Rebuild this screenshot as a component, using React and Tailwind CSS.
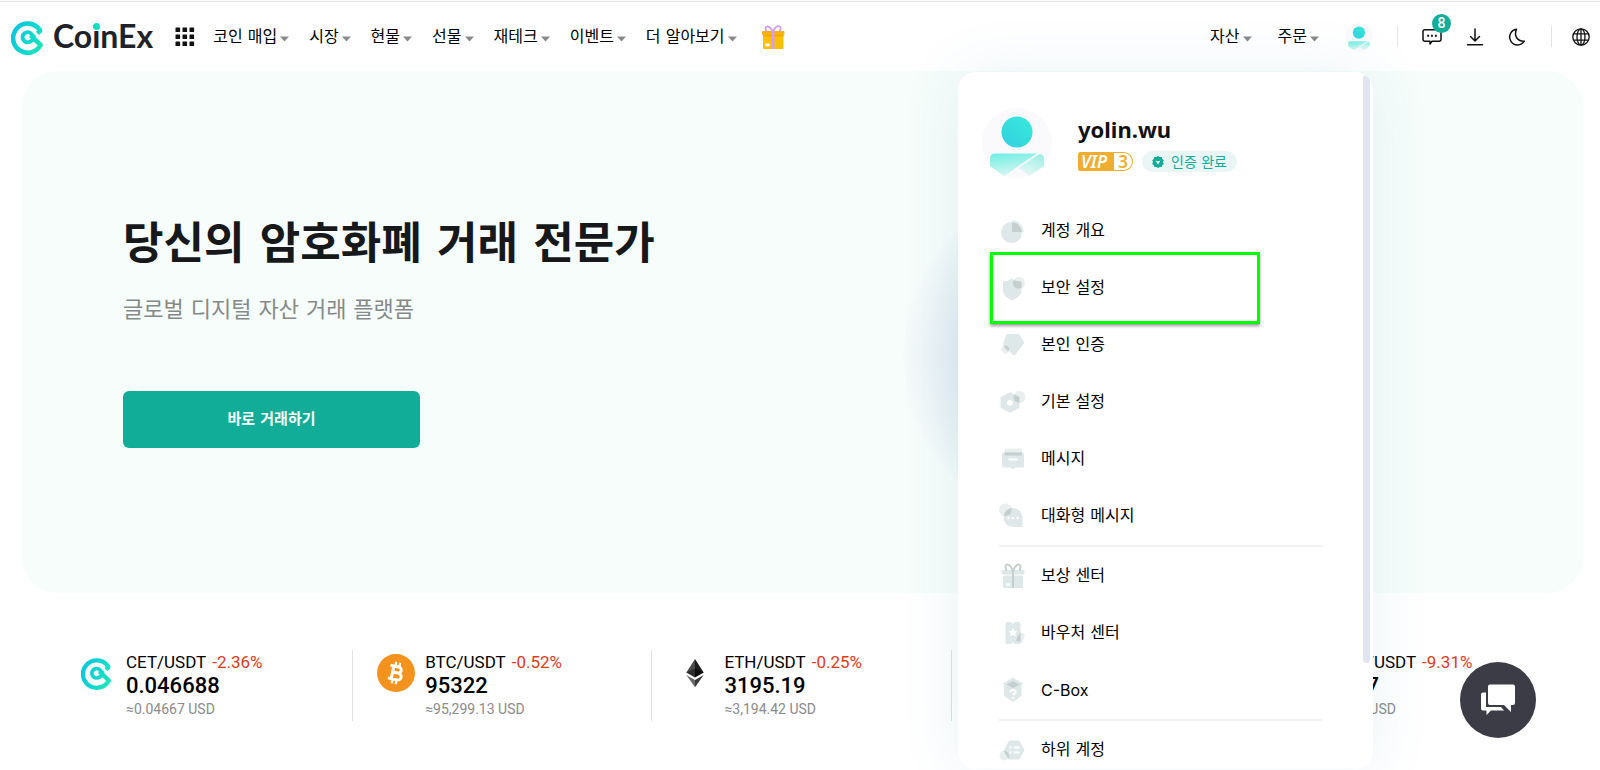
import React from "react";

const KO = "font-['DejaVu_Sans','Noto_Sans_CJK_KR',sans-serif]";

function CoinExMark({ id, className }) {
  return (
    <svg viewBox="0 0 34 36" className={className} fill="none" aria-hidden="true">
      <defs>
        <linearGradient id={id} x1="0" y1="10" x2="34" y2="26" gradientUnits="userSpaceOnUse">
          <stop stopColor="#0cc5dc" />
          <stop offset="0.55" stopColor="#10d8cf" />
          <stop offset="1" stopColor="#1ee6b4" />
        </linearGradient>
      </defs>
      <path
        d="M26.4 14.4L28.6 12.4 Q29.400 11.600 28.4 10.4 A14.6 14.6 0 1 0 29.6 26 L19.6 16.4"
        stroke={`url(#${id})`}
        strokeWidth="4.6"
        strokeLinejoin="round"
      />
      <path d="M23.6 18.6 L20.4 15 A5 5 0 1 0 19.4 22.4 L22.4 20.6" stroke={`url(#${id})`} strokeWidth="4" />
    </svg>
  );
}

function Caret() {
  return (
    <svg viewBox="0 0 9 6" className="mt-1 h-[6px] w-[9px]" aria-hidden="true">
      <path d="M0 0.5h9L4.500 5.500z" fill="#8a8a8a" />
    </svg>
  );
}

function NavItem({ children }) {
  return (
    <button type="button" className={`flex items-center gap-[3px] text-base leading-6 whitespace-nowrap text-black ${KO}`}>
      {children}
      <Caret />
    </button>
  );
}

function Avatar({ id, className }) {
  return (
    <svg viewBox="0 0 70 70" className={className} aria-hidden="true">
      <defs>
        <linearGradient id={`${id}h`} x1="0" y1="1" x2="1" y2="0">
          <stop stopColor="#34cfe0" />
          <stop offset="1" stopColor="#38eadb" />
        </linearGradient>
        <linearGradient id={`${id}b`} x1="0" y1="0" x2="0.3" y2="1">
          <stop stopColor="#6ceee2" />
          <stop offset="1" stopColor="#d6f6f2" />
        </linearGradient>
        <linearGradient id={`${id}r`} x1="1" y1="0" x2="0.6" y2="1">
          <stop stopColor="#9aeee4" />
          <stop offset="1" stopColor="#e2f7f5" />
        </linearGradient>
      </defs>
      <circle cx="35" cy="35" r="35" fill="#fafafc" />
      <circle cx="35" cy="24" r="15.500" fill={`url(#${id}h)`} />
      <path d="M13 45.500h42L22 68 8 58v-7.500q0-5 5-5z" fill={`url(#${id}b)`} />
      <path d="M57 46q5 0 5 5v7L47.500 68 36.500 60z" fill={`url(#${id}r)`} />
    </svg>
  );
}

function GiftIcon({ className }) {
  return (
    <svg viewBox="0 0 24 24" className={className} aria-hidden="true">
      <rect x="2" y="8" width="20.500" height="16" rx="1" fill="#fcc106" />
      <path d="M2 10h20.500v1.500H2z" fill="#eda900" />
      <rect x="1" y="6" width="22.500" height="4" rx="1" fill="#f9b30a" />
      <path d="M12 7C9 .5 4.600.2 4.600 3.600 4.600 5 5 6 5.500 6.500M12 7C15-.5 19.600.2 19.600 3.600 19.600 5 19 6 18.500 6.500" fill="none" stroke="#cf9bff" strokeWidth="1.800" />
      <path d="M10.900 6h2.500v18h-2.500z" fill="#d29dff" />
      <rect x="4.500" y="18.500" width="4" height="2.800" fill="#fff" />
    </svg>
  );
}

const base = "#dfe8e8";
const soft = "#e8efee";
const dark = "#c5cfce";

const drawings = {
  overview: (
    <>
      <circle cx="12.500" cy="15.500" r="10.500" fill={base} />
      <path d="M13 3a12 12 0 0 1 12 12H13z" fill={soft} />
      <path d="M13 5.200A10.300 10.300 0 0 1 23 15H13z" fill={dark} />
    </>
  ),
  security: (
    <>
      <path d="M4 7.500q5 0 9-3 4 3 9.500 3V17q0 5-9.500 9.500Q4 22 4 17z" fill={base} />
      <circle cx="20" cy="9" r="6" fill={soft} />
      <path d="M14.800 6q3.200 1.500 7.700 1.500V14q-5 2-7.500-1.500-2-3-.2-6.500z" fill={dark} />
    </>
  ),
  identity: (
    <>
      <path d="M7 4q.8-1 2-1h9.500q1.200 0 2 1l4.200 6.500q.8 1.200 0 2.200L16.500 23.500q-1.500 1.500-3 0L4 13z" fill={base} />
      <path d="M6.200 13.200L11.500 19l-5.200 4.500L1 18z" fill={soft} />
      <path d="M5 14.300q4.500 0 5.500 3.500l-1.500 3L4.500 15z" fill={dark} />
    </>
  ),
  preferences: (
    <>
      <circle cx="20.500" cy="9" r="6" fill={soft} />
      <path fillRule="evenodd" d="M11 4l9.500 5.200v10.600L11 25l-9.500-5.200V9.200zM11 11.800a3 3 0 1 0 .01 0z" fill={base} />
      <path d="M15.800 6.600l4.700 2.600v5.600q-6-.5-6-6z" fill={dark} />
    </>
  ),
  messages: (
    <>
      <rect x="5.500" y="3.500" width="17.500" height="8" rx="1.500" fill={soft} />
      <path d="M4.500 7.500H23.500q1.500 0 1.500 1.500v12q0 1.500-1.500 1.500h-7l-2.500 2-2.500-2H4.500Q3 22.500 3 21V9q0-1.500 1.500-1.500z" fill={base} />
      <path d="M5.500 7.500H23V10.500H5.500z" fill={dark} />
      <path d="M9.500 14.500h9" stroke="#fff" strokeWidth="2" />
    </>
  ),
  chat: (
    <>
      <circle cx="6.500" cy="8" r="6.500" fill={soft} />
      <path d="M14 6a9.500 9.500 0 0 1 9.500 9.500V25H14A9.500 9.500 0 0 1 14 6z" fill={base} />
      <path d="M12.800 6.100q1 8-8 8 1-7 8-8z" fill={dark} />
      <circle cx="9.500" cy="16" r="1.200" fill="#fff" />
      <circle cx="14" cy="16" r="1.200" fill="#fff" />
      <circle cx="18.500" cy="16" r="1.200" fill="#fff" />
    </>
  ),
  rewards: (
    <>
      <rect x="4" y="13.500" width="20" height="12.500" rx="1.500" fill={base} />
      <rect x="2.500" y="8" width="23" height="4.500" rx="1.500" fill={base} />
      <path d="M14 10C12 1.500 6.500 1 6.500 5q0 2 1 3.500M14 10c2-8.500 7.500-9 7.500-5q0 2-1 3.500M14 8v18" fill="none" stroke={dark} strokeWidth="2" />
      <path d="M7 21.500h4v2H7z" fill="#fff" />
    </>
  ),
  vouchers: (
    <>
      <path d="M17 17l5-3.500 4 2-3 9h-7z" fill={soft} />
      <path d="M8 3h4q1.500 3 4 0h4q1.500 0 1.500 1.500v19q0 1.500-1.500 1.500h-4q-2-3-4 0H8q-1.500 0-1.500-1.500v-19Q6.500 3 8 3z" fill={base} />
      <path d="M14 9l1.400 2.700 3 .5-2.100 2.100.5 3L14 15.900l-2.800 1.400.5-3-2.100-2.100 3-.5z" fill="#fff" />
      <path d="M21.500 13.500v9h-4q0-5 4-9z" fill={dark} />
    </>
  ),
  box: (
    <>
      <path d="M14 1.500L24 7.500 22.500 9v11L14 26 5 20V9L4 7.500z" fill={base} />
      <path d="M14 5l6.500 3.500L14 12 7.500 8.500z" fill={dark} />
      <path d="M11.500 16q0-2 2.500-2 2.800 0 2.800 2 0 1.300-1.600 1.900-1 .5-1 1.600M14.200 21v2" fill="none" stroke="#fff" strokeWidth="1.800" />
    </>
  ),
  subaccount: (
    <>
      <path d="M10 4.500h10.500l5 9.500-5 9.500H10L5 14z" fill={base} />
      <circle cx="5.500" cy="19.500" r="5" fill={soft} />
      <path d="M5.800 14.800q4.500.8 4.600 6.500L9.300 22.800 5 15.500z" fill={dark} />
      <path d="M10.500 11.500h2M14.500 11.500h6M10.500 16.500h2M14.500 16.500h6" stroke="#fff" strokeWidth="2" />
    </>
  ),
};

const groups = [
  [
    ["overview", "계정 개요"],
    ["security", "보안 설정"],
    ["identity", "본인 인증"],
    ["preferences", "기본 설정"],
    ["messages", "메시지"],
    ["chat", "대화형 메시지"],
  ],
  [
    ["rewards", "보상 센터"],
    ["vouchers", "바우처 센터"],
    ["box", "C-Box"],
  ],
  [["subaccount", "하위 계정"]],
];

function MenuRow({ icon, label }) {
  const highlighted = icon === "security";
  const font = label === "C-Box" ? "font-[Inter,sans-serif]" : KO;
  return (
    <li className="relative">
      <a href="#" className={`flex h-[57px] items-center gap-[14px] text-base text-black ${font}`}>
        <svg viewBox="0 0 28 28" className="size-7" aria-hidden="true">
          {drawings[icon]}
        </svg>
        {label}
      </a>
      {highlighted && (
        <span className="pointer-events-none absolute -top-[7px] -left-[9px] h-[72px] w-[270px] border-[3px] border-[#00ff00] shadow-[0_2px_3px_rgba(0,0,0,0.4)]" />
      )}
    </li>
  );
}

function AccountMenu() {
  return (
    <aside className="absolute top-full right-[227px] z-20 mt-px flex h-[calc(100vh-73px)] w-[415px] overflow-hidden rounded-[18px] bg-white shadow-[0_0_60px_rgba(60,140,160,0.11)]">
      <div className="min-w-0 flex-1 pr-[38px] pl-[41px]">
        <div className="-ml-[17px] flex items-center gap-[26px] pt-9">
          <Avatar id="big" className="size-[70px]" />
          <div className="flex flex-col gap-[7px]">
            <h2 className="font-['Noto_Sans',sans-serif] text-[22px] leading-[30px] font-bold text-[#111]">yolin.wu</h2>
            <div className="flex items-center gap-[9px]">
              <span className="flex h-[19px] items-center rounded-l-[3px] rounded-r-[10px] bg-[#f0ad30] pr-px pl-[3px] font-['Noto_Sans',sans-serif] text-[17px] font-semibold text-white">
                <em className="w-[33px]">VIP</em>
                <span className="flex h-[17px] w-[18px] items-center justify-center rounded-r-[9px] bg-white text-[#f0ad30]">3</span>
              </span>
              <span className={`flex h-[21px] items-center gap-[7px] rounded-full bg-[#eaf6f5] px-[10px] text-[14px] leading-5 text-[#12ad99] ${KO}`}>
                <svg viewBox="0 0 12 12" className="size-3" aria-hidden="true">
                  <path d="M6 0l1.700 1.100 2-.1.600 1.900 1.500 1.300L11 6l.8 1.900-1.500 1.300-.6 1.900-2-.1L6 12l-1.700-1-2 .1-.6-1.900L.2 7.900 1 6 .2 4.200l1.500-1.300L2.300 1l2 .1z" fill="#12ad99" />
                  <path d="M3.500 4.500L6 8.500l2.500-4L6 5.500z" fill="#fff" />
                </svg>
                인증 완료
              </span>
            </div>
          </div>
        </div>
        <nav className="mt-6 mr-[2px]">
          {groups.map((rows, i) => (
            <ul key={i} className={i ? "mt-px border-t-2 border-[#f0f1f2]" : ""}>
              {rows.map(([icon, label]) => (
                <MenuRow key={icon} icon={icon} label={label} />
              ))}
            </ul>
          ))}
        </nav>
      </div>
      <div className="mt-[3px] mr-[3px] h-[588px] w-[7px] rounded-full bg-[#e0e5f0]" />
    </aside>
  );
}

function Header() {
  return (
    <header className="relative mt-px flex h-[70px] items-center border-t border-[#e3e4e4] bg-white pr-[10px] pl-[11px]">
      <a href="#" className="flex items-center gap-2">
        <CoinExMark id="headerMark" className="h-9 w-[34px]" />
        <span className="pb-px font-[Lato,sans-serif] text-[32px] leading-9 font-bold text-[#20222a]">
          Co
          <span className="relative">
            i
            <span className="absolute top-[7px] left-px size-[7px] rounded-full bg-[#14dcc4]" />
          </span>
          nEx
        </span>
      </a>
      <button type="button" aria-label="메뉴" className="ml-[22px]">
        <svg viewBox="0 0 20 20" className="size-5" aria-hidden="true">
          {[0, 7, 14].map((y) => [0, 7, 14].map((x) => <rect key={`${x}-${y}`} x={x + 0.5} y={y + 0.5} width="4.600" height="4.600" rx="0.600" fill="#111" />))}
        </svg>
      </button>
      <nav className="ml-[18px] flex items-center gap-5">
        <NavItem>코인 매입</NavItem>
        <NavItem>시장</NavItem>
        <NavItem>현물</NavItem>
        <NavItem>선물</NavItem>
        <NavItem>재테크</NavItem>
        <NavItem>이벤트</NavItem>
        <NavItem>더 알아보기</NavItem>
        <a href="#" aria-label="보상" className="ml-1">
          <GiftIcon className="size-6" />
        </a>
      </nav>
      <div className="ml-auto flex items-center">
        <div className="flex items-center gap-[26px]">
          <NavItem>자산</NavItem>
          <NavItem>주문</NavItem>
          <Avatar id="small" className="size-7" />
        </div>
        <span className="mx-[24px] h-[21px] w-px bg-[#e3e3e3]" />
        <div className="flex items-center gap-6">
          <button type="button" aria-label="메시지" className="relative">
            <svg viewBox="0 0 20 20" className="size-5" fill="none" stroke="#111" strokeWidth="1.500" aria-hidden="true">
              <path d="M3 2.800h14q2 0 2 2v7.500q0 2-2 2h-7L8 17v-2.700H3q-2 0-2-2V4.800q0-2 2-2z" strokeLinejoin="round" />
              <path d="M5.200 8.700h1.900M9 8.700h1.900M12.900 8.700h1.900" strokeWidth="2" />
            </svg>
            <span className="absolute -top-[13px] left-[10px] flex size-[19px] items-center justify-center rounded-full bg-[#12ad99] font-[Roboto,sans-serif] text-sm leading-none font-medium text-white">8</span>
          </button>
          <button type="button" aria-label="다운로드">
            <svg viewBox="0 0 18 18" className="size-[18px]" fill="none" stroke="#111" strokeWidth="1.500" strokeLinecap="round" aria-hidden="true">
              <path d="M9 1v12M4.500 8.500L9 13l4.500-4.500M1.500 16.800h15" />
            </svg>
          </button>
          <button type="button" aria-label="다크 모드">
            <svg viewBox="0 0 18 18" className="size-[18px]" fill="none" stroke="#111" strokeWidth="1.500" strokeLinejoin="round" aria-hidden="true">
              <path d="M8.500 1.200A7.900 7.900 0 1 0 16.300 13.200Q11 13.500 8.500 9.500 6.500 5.500 8.500 1.200z" />
            </svg>
          </button>
        </div>
        <span className="mr-[20px] ml-[25px] h-[21px] w-px bg-[#e3e3e3]" />
        <button type="button" aria-label="언어">
          <svg viewBox="0 0 18 18" className="size-[18px]" fill="none" stroke="#111" strokeWidth="1.300" aria-hidden="true">
            <circle cx="9" cy="9" r="8.200" />
            <ellipse cx="9" cy="9" rx="4" ry="8.200" />
            <path d="M1.500 5.800h15M1.500 12.200h15M9 1v16" />
          </svg>
        </button>
      </div>
      <AccountMenu />
    </header>
  );
}

function Hero() {
  return (
    <section className="relative mx-[22px] mr-[17px] h-[522px] overflow-hidden rounded-[36px] bg-[#f6fdfb] pt-[143px] pl-[101px]">
      <div className="absolute top-[110px] left-[881px] size-[350px] rounded-full bg-[radial-gradient(closest-side,#d6e2f2_50%,#e6eff4_75%,#f5fbfa_100%)]" />
      <h1 className={`text-[44px] leading-[60px] font-bold text-[#17181a] ${KO}`}>당신의 암호화폐 거래 전문가</h1>
      <p className={`mt-5 text-[22px] leading-8 text-[#858a88] ${KO}`}>글로벌 디지털 자산 거래 플랫폼</p>
      <button type="button" className={`mt-[65px] h-[57px] w-[297px] rounded-md bg-[#12ad99] text-[15px] font-bold text-white ${KO}`}>
        바로 거래하기
      </button>
    </section>
  );
}

function BitcoinIcon() {
  return (
    <svg viewBox="0 0 38 38" className="size-[38px]" aria-hidden="true">
      <circle cx="19" cy="19" r="19" fill="#f3921c" />
      <g transform="rotate(12 19 19)" fill="none" stroke="#fff" strokeWidth="3">
        <path d="M12 12.500h8.500a3 3 0 0 1 0 6.200H15.500M12 25.500h9.500a3.400 3.400 0 0 0 0-6.800M15.500 12.500v13" />
        <path d="M17 8v4.500M21 8v4.500M17 25.500V30M21 25.500V30" strokeWidth="2.200" />
      </g>
    </svg>
  );
}

function EthereumIcon() {
  return (
    <svg viewBox="0 0 38 38" className="size-[38px]" aria-hidden="true">
      <path d="M19 5v15.800l-8.700-2.200z" fill="#4a4a4a" />
      <path d="M19 5v15.800l8.700-2.200z" fill="#1b1b1b" />
      <path d="M19 14.500v9l-8.700-4.900z" fill="#2b2b2b" />
      <path d="M19 14.500v9l8.700-4.900z" fill="#0c0c0c" />
      <path d="M10.300 21l8.700 5v7.200z" fill="#6b6b6b" />
      <path d="M27.700 21L19 26v7.200z" fill="#3a3a3a" />
    </svg>
  );
}

const tickers = [
  { pair: "CET/USDT", change: "-2.36%", price: "0.046688", usd: "≈0.04667 USD", icon: <CoinExMark id="tickerMark" className="mx-[3px] h-[38px] w-8" /> },
  { pair: "BTC/USDT", change: "-0.52%", price: "95322", usd: "≈95,299.13 USD", icon: <BitcoinIcon /> },
  { pair: "ETH/USDT", change: "-0.25%", price: "3195.19", usd: "≈3,194.42 USD", icon: <EthereumIcon /> },
  null,
  { pair: "DOGE/USDT", change: "-9.31%", price: "0.037", usd: "≈0.037 USD", icon: null },
];

function Tickers() {
  return (
    <ul className="mt-[57px] mr-[50px] ml-[54px] grid grid-cols-5 font-[Roboto,sans-serif]">
      {tickers.map((t, i) => (
        <li key={i} className={`flex h-[71px] gap-[10px] pl-6 ${i < 4 ? "border-r border-[#dfe1e2]" : ""}`}>
          {t && (
            <>
              <span className="mt-1 w-[38px] shrink-0">{t.icon}</span>
              <div className="whitespace-nowrap">
                <p className="flex gap-[6px] text-[17px] leading-6 text-black">
                  {t.pair} <span className="text-[#e03a20]">{t.change}</span>
                </p>
                <p className="text-[22px] leading-6 font-medium text-black">{t.price}</p>
                <p className="text-[14px] leading-[22px] text-[#8b8b8b]">{t.usd}</p>
              </div>
            </>
          )}
        </li>
      ))}
    </ul>
  );
}

export default function App() {
  return (
    <div className="relative flow-root h-screen overflow-hidden bg-white">
      <Header />
      <main>
        <Hero />
        <Tickers />
      </main>
      <button type="button" aria-label="채팅 상담" className="fixed right-16 bottom-8 z-30 flex size-[76px] items-center justify-center rounded-full bg-[#3b3c46]">
        <svg viewBox="0 0 36 34" className="h-[34px] w-9" aria-hidden="true">
          <path d="M3 9.500h3V24h15l3 3.500H11L6.500 32v-4.500H3q-2 0-2-2v-14q0-2 2-2z" fill="#fff" />
          <path d="M10 1.500h23q2 0 2 2V20q0 2-2 2h-2v7L24 22H10q-2 0-2-2V3.500q0-2 2-2z" fill="#fff" stroke="#3b3c46" strokeWidth="4" />
          <path d="M10 1.500h23q2 0 2 2V20q0 2-2 2h-2v7L24 22H10q-2 0-2-2V3.500q0-2 2-2z" fill="#fff" />
        </svg>
      </button>
    </div>
  );
}
